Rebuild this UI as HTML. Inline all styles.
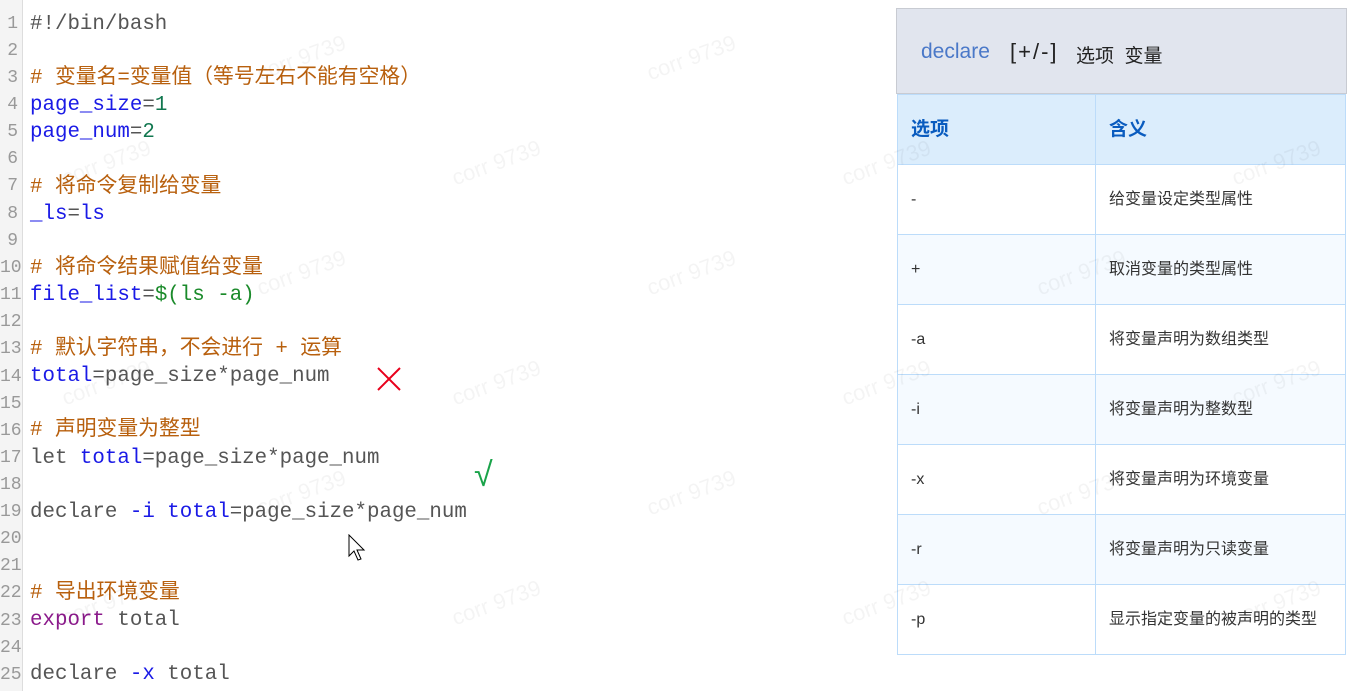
<!DOCTYPE html>
<html><head><meta charset="utf-8"><style>
body{margin:0;width:1356px;height:691px;background:#fff;position:relative;overflow:hidden;font-family:"Liberation Sans","Noto Sans CJK SC",sans-serif}
.gut{position:absolute;left:0;top:0;width:22px;height:691px;background:#f4f4f4;border-right:1px solid #ddd}
.ln{position:absolute;left:0;width:18px;text-align:right;font:18px "Liberation Mono",monospace;color:#999;}
.cd{position:absolute;left:30px;font:20.8px "Liberation Mono","Noto Sans CJK SC",monospace;color:#555;white-space:pre;line-height:27.1px}
.v{color:#1a1ae6}.n{color:#11774f}.c{color:#b8600e}.k{color:#8b1a8b}.s{color:#1a8a2a}
.wm{position:absolute;color:rgba(0,0,0,0.045);font-size:22px;transform:rotate(-20deg)}
.title{position:absolute;left:896px;top:8px;width:449px;height:84px;background:#e1e5ee;border:1px solid #c8cbd2}
.tbl{position:absolute;left:897px;top:94px;width:449px;border:1px solid #bcdcfa;border-collapse:collapse}
.tbl td{border:1px solid #bcdcfa;height:69px;font-size:16px;line-height:20px;color:#333;padding:0 0 0 13px;vertical-align:middle}
.tbl tr:nth-child(odd) td{background:#f5faff}
.tbl tr:first-child td{background:#dbedfc;color:#0a5cbf;font-weight:bold;font-size:19px}
</style></head><body>
<div class="gut"></div>
<div class="title"><span style="position:absolute;left:24px;top:31px;font-size:21px;color:#4a78c8">declare</span><span style="position:absolute;left:113px;top:30px;font-size:22px;letter-spacing:2px;color:#222">[+/-]</span><span style="position:absolute;left:179px;top:32px;font-size:19px;color:#222">选项&nbsp;&nbsp;变量</span></div>
<table class="tbl">
<tr><td style="width:184px">选项</td><td>含义</td></tr>
<tr><td>-</td><td>给变量设定类型属性</td></tr>
<tr><td>+</td><td>取消变量的类型属性</td></tr>
<tr><td>-a</td><td>将变量声明为数组类型</td></tr>
<tr><td>-i</td><td>将变量声明为整数型</td></tr>
<tr><td>-x</td><td>将变量声明为环境变量</td></tr>
<tr><td>-r</td><td>将变量声明为只读变量</td></tr>
<tr><td>-p</td><td>显示指定变量的被声明的类型</td></tr>
</table>
<div class="ln" style="top:14px">1</div><div class="ln" style="top:41px">2</div><div class="ln" style="top:68px">3</div><div class="ln" style="top:95px">4</div><div class="ln" style="top:122px">5</div><div class="ln" style="top:149px">6</div><div class="ln" style="top:176px">7</div><div class="ln" style="top:204px">8</div><div class="ln" style="top:231px">9</div><div class="ln" style="top:258px">10</div><div class="ln" style="top:285px">11</div><div class="ln" style="top:312px">12</div><div class="ln" style="top:339px">13</div><div class="ln" style="top:367px">14</div><div class="ln" style="top:394px">15</div><div class="ln" style="top:421px">16</div><div class="ln" style="top:448px">17</div><div class="ln" style="top:475px">18</div><div class="ln" style="top:502px">19</div><div class="ln" style="top:529px">20</div><div class="ln" style="top:556px">21</div><div class="ln" style="top:583px">22</div><div class="ln" style="top:611px">23</div><div class="ln" style="top:638px">24</div><div class="ln" style="top:665px">25</div>
<div class="cd" style="top:11px">#!/bin/bash

<span class="c"># 变量名=变量值（等号左右不能有空格）</span>
<span class="v">page_size</span>=<span class="n">1</span>
<span class="v">page_num</span>=<span class="n">2</span>

<span class="c"># 将命令复制给变量</span>
<span class="v">_ls</span>=<span class="v">ls</span>

<span class="c"># 将命令结果赋值给变量</span>
<span class="v">file_list</span>=<span class="s">$(ls -a)</span>

<span class="c"># 默认字符串，不会进行 + 运算</span>
<span class="v">total</span>=page_size*page_num

<span class="c"># 声明变量为整型</span>
let <span class="v">total</span>=page_size*page_num

declare <span class="v">-i</span> <span class="v">total</span>=page_size*page_num


<span class="c"># 导出环境变量</span>
<span class="k">export</span> total

declare <span class="v">-x</span> total</div>
<svg style="position:absolute;left:376px;top:366px" width="26" height="26"><path d="M2 2L24 24M24 2L2 24" stroke="#e8001c" stroke-width="2"/></svg>
<div style="position:absolute;left:474px;top:456px;font-size:34px;color:#1aa34a">√</div>
<svg style="position:absolute;left:348px;top:534px" width="20" height="30"><path d="M1 1L1 22L6 17L10 26L13 25L9 16L16 16Z" fill="#fff" stroke="#000" stroke-width="1"/></svg>
<div class="wm" style="left:255px;top:45px">corr 9739</div><div class="wm" style="left:645px;top:45px">corr 9739</div>
<div class="wm" style="left:60px;top:150px">corr 9739</div><div class="wm" style="left:450px;top:150px">corr 9739</div><div class="wm" style="left:840px;top:150px">corr 9739</div><div class="wm" style="left:1230px;top:150px">corr 9739</div>
<div class="wm" style="left:255px;top:260px">corr 9739</div><div class="wm" style="left:645px;top:260px">corr 9739</div><div class="wm" style="left:1035px;top:260px">corr 9739</div>
<div class="wm" style="left:60px;top:370px">corr 9739</div><div class="wm" style="left:450px;top:370px">corr 9739</div><div class="wm" style="left:840px;top:370px">corr 9739</div><div class="wm" style="left:1230px;top:370px">corr 9739</div>
<div class="wm" style="left:255px;top:480px">corr 9739</div><div class="wm" style="left:645px;top:480px">corr 9739</div><div class="wm" style="left:1035px;top:480px">corr 9739</div>
<div class="wm" style="left:60px;top:590px">corr 9739</div><div class="wm" style="left:450px;top:590px">corr 9739</div><div class="wm" style="left:840px;top:590px">corr 9739</div><div class="wm" style="left:1230px;top:590px">corr 9739</div>
</body></html>
